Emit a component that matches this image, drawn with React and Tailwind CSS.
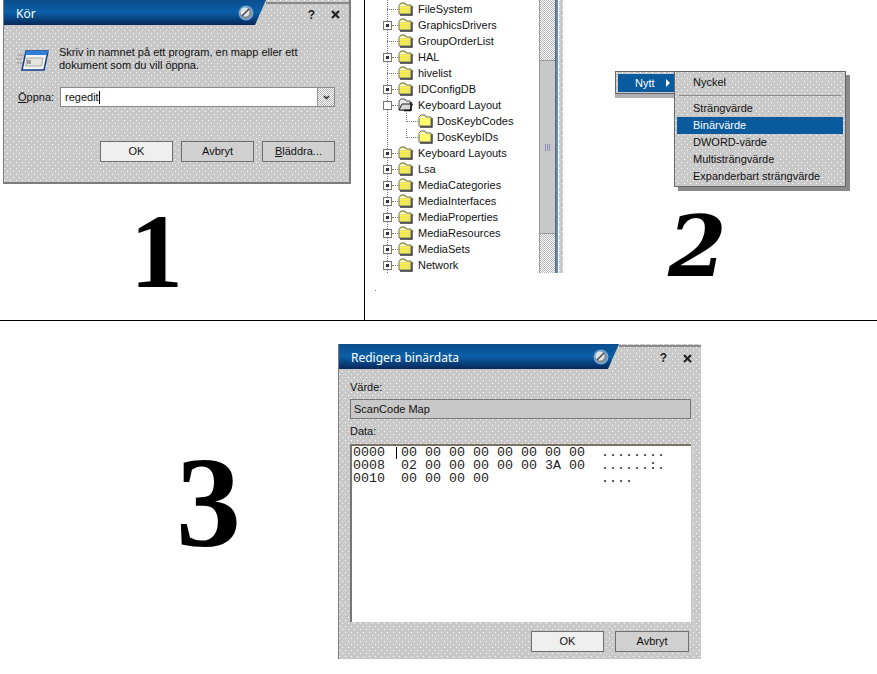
import React from "react";

const FONT = "font-['Liberation_Sans',sans-serif]";
const DITHER =
  "bg-[#c9c9c9] bg-[radial-gradient(circle_at_0.5px_0.5px,#fff_0.75px,transparent_0.75px),radial-gradient(circle_at_3.5px_3.5px,#fff_0.75px,transparent_0.75px)] bg-[length:6px_6px]";
const FINE = "bg-[conic-gradient(#fff_25%,#b4b4b4_0_50%,#fff_0_75%,#b4b4b4_0)] bg-[length:2px_2px]";

function Knob() {
  return (
    <svg width="16" height="16" viewBox="0 0 16 16" className="shrink-0">
      <circle cx="8" cy="8" r="7.5" fill="#6fa8d8" />
      <circle cx="8" cy="8" r="6" fill="#8a8f96" />
      <circle cx="7" cy="7" r="4.5" fill="#e2e4e6" />
      <path d="M4 11 L11 4" stroke="#4a4f55" strokeWidth="1.6" />
    </svg>
  );
}

function TitleBar({ title, width, knobRight, lineTop }) {
  return (
    <div className="flex h-[25px] shrink-0">
      <div
        className={`${width} flex items-center justify-between bg-linear-to-b from-[#0b4e8e] via-[#0a5fa8] to-[#07295a] [clip-path:polygon(0_0,100%_0,calc(100%-11px)_100%,0_100%)] ${knobRight}`}
      >
        <span className="pt-[3px] text-white text-[12px] font-['Noto_Sans',sans-serif]">{title}</span>
        <Knob />
      </div>
      <div className={`flex-1 border-t-2 border-[#8b8b8b] flex items-center justify-end gap-[16px] pr-[9px] ${lineTop}`}>
        <span className="text-[12px] font-bold leading-none text-[#222]">?</span>
        <svg width="9" height="9" viewBox="0 0 9 9">
          <path d="M1 1 L8 8 M8 1 L1 8" stroke="#222" strokeWidth="2.2" />
        </svg>
      </div>
    </div>
  );
}

function XpButton({ children, wide = "w-[73px]", light }) {
  return (
    <div
      className={`${wide} h-[21px] flex items-center justify-center border border-[#6f6f6f] text-[11px] text-[#111] ${light ? "bg-[#efefef]" : "bg-[#d0d0d0]"}`}
    >
      {children}
    </div>
  );
}

function RunIcon() {
  return (
    <svg width="33" height="22" viewBox="0 0 33 22" className="shrink-0 mt-[4px] -ml-[2px]">
      <path d="M1 5h7M0 9h6M1 13h5" stroke="#9a9a9a" strokeWidth="1" />
      <path d="M10 1 H32 L28 20 H6 Z" fill="#f4f4f0" stroke="#0f3f8c" strokeWidth="1.5" />
      <path d="M10 1 H32 L31 5 H9 Z" fill="#2f7fd8" />
      <path d="M11 8 H27 L25.5 16 H9.5 Z" fill="#e6e6de" stroke="#8c8c8c" strokeWidth="0.7" />
      <path d="M12 10v4M14 10v4" stroke="#333" strokeWidth="0.8" />
    </svg>
  );
}

function Folder({ kind = "closed" }) {
  if (kind === "open") {
    return (
      <svg width="15" height="14" viewBox="0 0 15 14" className="shrink-0">
        <path d="M1 3 L3 1 H7 L8 3 H12 V12 H1 Z" fill="#e9e9e9" stroke="#555" />
        <path d="M1 12 L4 6 H14.5 L12 12 Z" fill="#d8d8d8" stroke="#222" />
        <path d="M13 4 V13 M6 12.5 H13" stroke="#111" strokeWidth="1.5" />
      </svg>
    );
  }
  const pale = kind === "pale";
  return (
    <svg width="15" height="14" viewBox="0 0 15 14" className="shrink-0">
      <defs>
        <pattern id="folder-dither" width="2" height="2" patternUnits="userSpaceOnUse">
          <rect width="2" height="2" fill="#f8f040" />
          <rect width="1" height="1" fill="#d8d8a0" />
        </pattern>
      </defs>
      <path d="M1 3 L3 1 H7 L8 3 H13 V12 H1 Z" fill={pale ? "#fffb6a" : "url(#folder-dither)"} stroke="#6d6d6d" />
      <path d="M1.5 3.5 H7.5" stroke="#fff" />
      <path d="M14 4 V13 H2" stroke="#333" strokeWidth="1.4" fill="none" />
    </svg>
  );
}

function Expander({ open }) {
  return (
    <div className="w-[9px] h-[9px] shrink-0 border border-[#777] bg-white flex items-center justify-center">
      {!open && <div className="w-[3px] h-[3px] bg-[#333]" />}
    </div>
  );
}

function TreeRow({ label, mode }) {
  const exp = mode === "plus" || mode === "minus";
  return (
    <div className="flex h-4 items-center pl-[18px] text-[11px] text-[#111]">
      {exp ? <Expander open={mode === "minus"} /> : null}
      <div className={`${exp ? "w-[6px]" : "w-[11px] ml-[4px]"} shrink-0 border-t border-dotted border-[#777]`} />
      <Folder kind={mode === "minus" ? "open" : "closed"} />
      <span className="ml-[5px] pt-px whitespace-nowrap">{label}</span>
    </div>
  );
}

function ChildRow({ label }) {
  return (
    <div className="relative flex h-4 items-center pl-[41px] text-[11px] text-[#111]">
      <div className="absolute left-[41px] top-0 h-[9px] border-l border-dotted border-[#777]" />
      <div className="w-[12px] shrink-0 border-t border-dotted border-[#777]" />
      <Folder kind="pale" />
      <span className="ml-[4px] pt-px whitespace-nowrap">{label}</span>
    </div>
  );
}

function Tree() {
  return (
    <div className="relative w-[174px] h-[273px] overflow-hidden pt-px">
      <div className="absolute left-[22px] top-0 bottom-0 border-l border-dotted border-[#777]" />
      <div className="relative">
        <TreeRow label="FileSystem" />
        <TreeRow label="GraphicsDrivers" mode="plus" />
        <TreeRow label="GroupOrderList" />
        <TreeRow label="HAL" mode="plus" />
        <TreeRow label="hivelist" />
        <TreeRow label="IDConfigDB" mode="plus" />
        <TreeRow label="Keyboard Layout" mode="minus" />
        <ChildRow label="DosKeybCodes" />
        <ChildRow label="DosKeybIDs" />
        <TreeRow label="Keyboard Layouts" mode="plus" />
        <TreeRow label="Lsa" mode="plus" />
        <TreeRow label="MediaCategories" mode="plus" />
        <TreeRow label="MediaInterfaces" mode="plus" />
        <TreeRow label="MediaProperties" mode="plus" />
        <TreeRow label="MediaResources" mode="plus" />
        <TreeRow label="MediaSets" mode="plus" />
        <TreeRow label="Network" mode="plus" />
      </div>
    </div>
  );
}

function Scrollbar() {
  return (
    <div className="flex h-[273px]">
      <div className={`w-[16px] flex flex-col border-l border-[#999] ${FINE}`}>
        <div className="h-[60px]" />
        <div className="flex-1 bg-[#c8c8c8] border-y border-[#9a9a9a] flex items-center justify-center">
          <div className="w-[6px] h-[7px] bg-[repeating-linear-gradient(90deg,#8f8fc0_0_1px,transparent_1px_2px)]" />
        </div>
        <div className="h-[39px]" />
      </div>
      <div className="w-px bg-[#666]" />
      <div className="w-[2px] bg-[#5f8db8]" />
      <div className="w-px bg-white" />
      <div className={`w-[4px] ${DITHER}`} />
    </div>
  );
}

function MenuItem({ children, active }) {
  return (
    <div
      className={`flex h-[17px] items-center pl-[16px] text-[11px] whitespace-nowrap ${active ? "bg-[#0a5a9e] text-white" : "text-[#111]"}`}
    >
      {children}
    </div>
  );
}

function Menu() {
  return (
    <div className="absolute left-[250px] top-[71px] flex items-start text-[11px]">
      <div className={`w-[59px] h-[23px] p-[2px] pr-0 border border-[#666] border-r-0 shadow-[0_4px_0_#b0b0b0] ${DITHER}`}>
        <div className="h-[18px] bg-[#0a5a9e] text-white flex items-center pl-[17px] gap-[11px]">
          <span>Nytt</span>
          <span className="w-0 h-0 border-y-[4px] border-y-transparent border-l-[4px] border-l-white" />
        </div>
      </div>
      <div className={`w-[172px] h-[116px] border border-[#666] pt-px px-[2px] shadow-[4px_4px_0_#8a8a8a] ${DITHER}`}>
        <div className="h-[19px] flex items-center pl-[16px] text-[#111]">Nyckel</div>
        <div className="mx-[2px] my-[3px] border-t border-[#8a8a8a]" />
        <div className="h-px" />
        <MenuItem>Strängvärde</MenuItem>
        <MenuItem active>Binärvärde</MenuItem>
        <MenuItem>DWORD-värde</MenuItem>
        <MenuItem>Multisträngvärde</MenuItem>
        <MenuItem>Expanderbart strängvärde</MenuItem>
      </div>
    </div>
  );
}

function RunDialog() {
  return (
    <div className={`w-[348px] h-[184px] flex flex-col border-l border-r-2 border-b-2 border-[#7d7d7d] ${DITHER}`}>
      <TitleBar title="Kör" width="w-[262px]" knobRight="pl-[12px] pr-[12px]" lineTop="mt-[2px]" />
      <div className="flex-1 flex flex-col pl-[14px] pr-[14px] text-[11px] text-[#111]">
        <div className="flex items-start gap-[10px] pt-[21px]">
          <RunIcon />
          <p className="leading-[13px]">
            Skriv in namnet på ett program, en mapp eller ett
            <br />
            dokument som du vill öppna.
          </p>
        </div>
        <div className="flex items-center mt-[15px]">
          <span className="w-[42px] shrink-0">
            <u>Ö</u>ppna:
          </span>
          <div className="w-[275px] h-[20px] flex border border-[#8a8a8a] bg-white">
            <div className="flex-1 pl-[4px] flex items-center">
              regedit<span className="w-px h-[13px] bg-black" />
            </div>
            <div className={`w-[17px] border-l border-[#999] flex items-center justify-center ${FINE}`}>
              <svg width="7" height="5" viewBox="0 0 7 5">
                <path d="M1 1 L3.5 3.5 L6 1" stroke="#222" strokeWidth="1.4" fill="none" />
              </svg>
            </div>
          </div>
        </div>
        <div className="flex justify-end gap-[8px] mt-[34px]">
          <XpButton light>OK</XpButton>
          <XpButton>Avbryt</XpButton>
          <XpButton>
            <span>
              <u>B</u>läddra...
            </span>
          </XpButton>
        </div>
      </div>
    </div>
  );
}

function HexDialog() {
  return (
    <div className={`w-[363px] h-[315px] flex flex-col border-l border-[#7d7d7d] ${DITHER}`}>
      <TitleBar title="Redigera binärdata" width="w-[280px]" knobRight="pl-[12px] pr-[10px]" lineTop="mt-px" />
      <div className="flex-1 flex flex-col pl-[11px] pr-[10px] text-[11px] text-[#111]">
        <div className="mt-[11px] h-[14px] leading-[14px]">Värde:</div>
        <div className="mt-[5px] h-[20px] flex items-center pl-[3px] pt-px border border-[#777] bg-[#c8c8c8]">ScanCode Map</div>
        <div className="mt-[5px] h-[14px] leading-[14px]">Data:</div>
        <div className="relative mt-[6px] h-[178px] bg-white border-t-2 border-l-2 border-t-[#7a7262] border-l-[#777] pl-px font-['Liberation_Mono',monospace] text-[13.33px] leading-[13px] whitespace-pre text-[#222]">
          <div className="h-[13px] overflow-hidden">0000  00 00 00 00 00 00 00 00  ........</div>
          <div className="h-[13px] overflow-hidden">0008  02 00 00 00 00 00 3A 00  ......:.</div>
          <div className="h-[13px] overflow-hidden">0010  00 00 00 00              ....</div>
          <div className="absolute left-[44px] top-px w-px h-[12px] bg-black" />
        </div>
        <div className="flex justify-end gap-[11px] mt-[9px] pr-[2px]">
          <XpButton light>OK</XpButton>
          <XpButton wide="w-[74px]">Avbryt</XpButton>
        </div>
      </div>
    </div>
  );
}

function Numeral({ children, size }) {
  return <span className={`block font-bold leading-none text-black ${size}`}>{children}</span>;
}

export default function App() {
  return (
    <div className={`w-[877px] h-[674px] overflow-hidden bg-white ${FONT}`}>
      <div className="flex h-[321px] border-b border-black">
        <div className="w-[365px] shrink-0 border-r border-black pl-[3px]">
          <RunDialog />
          <div className="pl-[127px] pt-[15px]">
            <Numeral size="text-[106px] font-['Liberation_Serif',serif]">1</Numeral>
          </div>
        </div>
        <div className="relative flex-1 flex">
          <div>
            <div className="flex">
              <Tree />
              <Scrollbar />
            </div>
            <div className="ml-[10px] mt-[17px] w-px h-px bg-[#777]" />
          </div>
          <Menu />
          <div className="pl-[105px] pt-[205px]">
            <Numeral size="text-[84px] italic font-['DejaVu_Serif',serif]">2</Numeral>
          </div>
        </div>
      </div>
      <div className="flex pt-[23px]">
        <div className="w-[338px] shrink-0 pl-[176px] pt-[93px]">
          <Numeral size="text-[130px] font-['Liberation_Serif',serif]">3</Numeral>
        </div>
        <HexDialog />
      </div>
    </div>
  );
}
